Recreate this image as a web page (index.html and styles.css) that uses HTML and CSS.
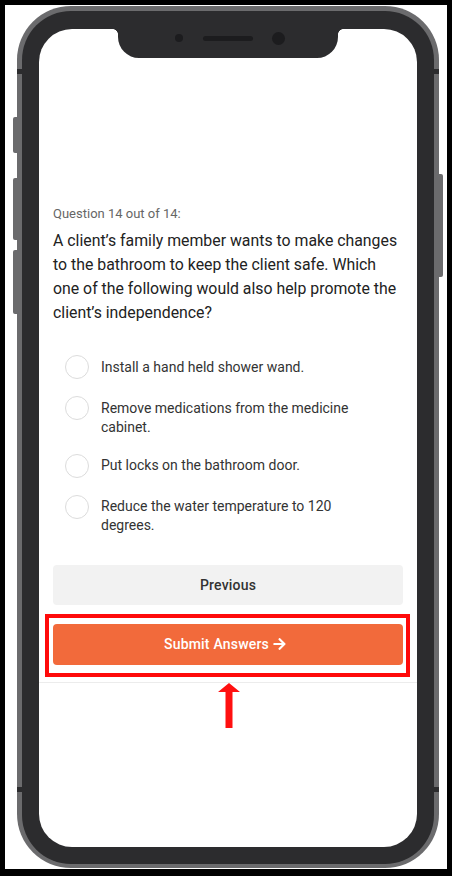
FILE: index.html
```html
<!DOCTYPE html>
<html lang="en">
<head>
<meta charset="utf-8">
<title>Quiz</title>
<link rel="stylesheet" href="styles.css">
</head>
<body>
<div class="frame">
  <div class="phone">
    <span class="side-btn side-l1"></span>
    <span class="side-btn side-l2"></span>
    <span class="side-btn side-l3"></span>
    <span class="side-btn side-r1"></span>
    <span class="band band-tl"></span>
    <span class="band band-tr"></span>
    <span class="band band-bl"></span>
    <span class="band band-br"></span>
    <div class="body">
      <div class="screen">
        <div class="notch">
          <div class="notch-row">
            <span class="sensor"></span>
            <span class="speaker"></span>
            <span class="camera"></span>
          </div>
        </div>
        <div class="content">
          <p class="q-label">Question 14 out of 14:</p>
          <p class="q-text">A client’s family member wants to make changes to the bathroom to keep the client safe. Which one of the following would also help promote the client’s independence?</p>
          <div class="options">
            <div class="option"><span class="radio"></span><span class="opt-text">Install a hand held shower wand.</span></div>
            <div class="option"><span class="radio"></span><span class="opt-text">Remove medications from the medicine cabinet.</span></div>
            <div class="option"><span class="radio"></span><span class="opt-text">Put locks on the bathroom door.</span></div>
            <div class="option"><span class="radio"></span><span class="opt-text">Reduce the water temperature to 120 degrees.</span></div>
          </div>
          <div class="btn btn-prev">Previous</div>
          <div class="highlight">
            <div class="btn btn-submit">Submit Answers
              <svg class="arrow-icon" viewBox="0 0 448 512" aria-hidden="true"><path fill="#fff" d="M190.5 66.9l22.2-22.2c9.4-9.4 24.6-9.4 33.9 0L441 239c9.4 9.4 9.4 24.6 0 33.9L246.6 467.3c-9.4 9.4-24.6 9.4-33.9 0l-22.2-22.2c-9.5-9.5-9.3-25 .4-34.3L311.4 296H24c-13.3 0-24-10.7-24-24v-32c0-13.3 10.7-24 24-24h287.4L190.9 101.2c-9.8-9.3-10-24.8-.4-34.3z"/></svg>
            </div>
          </div>
          <div class="separator"></div>
          <div class="pointer">
            <svg viewBox="0 0 22 46" width="22" height="46" aria-hidden="true"><polygon fill="#ff1010" points="11,0 22,9 14.5,9 14.5,45 7.5,45 7.5,9 0,9"/></svg>
          </div>
        </div>
      </div>
    </div>
  </div>
</div>
</body>
</html>
```

FILE: styles.css
```css
* { box-sizing: border-box; }
html, body { margin: 0; padding: 0; background: #fff; }
body { font-family: Roboto, "Liberation Sans", sans-serif; }

.frame {
  width: 452px;
  height: 876px;
  border: 5px solid #000;
  border-bottom-width: 7px;
  padding: 1px 0 0 12px;
  background: #fff;
}

.phone {
  position: relative;
  width: 422px;
  height: 862px;
  background: #6b6b6d;
  border-radius: 54px;
  padding: 5px 5px 4px 5px;
}

.side-btn {
  position: absolute;
  width: 6px;
  background: #6b6b6d;
  border-radius: 2px;
}
.side-l1 { left: -4px; top: 111px; height: 36px; }
.side-l2 { left: -4px; top: 172px; height: 62px; }
.side-l3 { left: -4px; top: 244px; height: 64px; }
.side-r1 { right: -4px; top: 168px; height: 103px; }

.band {
  position: absolute;
  width: 6px;
  height: 5px;
  background: #2c2c2e;
}
.band-tl { left: 0; top: 63px; }
.band-tr { right: 0; top: 63px; }
.band-bl { left: 0; top: 781px; }
.band-br { right: 0; top: 781px; }

.body {
  height: 100%;
  background: #2c2c2e;
  border-radius: 49px;
  padding: 18px 17px 17px 17px;
}

.screen {
  position: relative;
  height: 100%;
  background: #fff;
  border-radius: 33px;
  overflow: hidden;
}

.notch {
  position: absolute;
  top: 0;
  left: 79px;
  width: 220px;
  height: 29px;
  background: #2c2c2e;
  border-radius: 0 0 21px 21px;
}
.notch::before,
.notch::after {
  content: "";
  position: absolute;
  top: 0;
  width: 5px;
  height: 5px;
}
.notch::before {
  left: -5px;
  background: radial-gradient(circle at 0 100%, transparent 4.5px, #2c2c2e 5px);
}
.notch::after {
  right: -5px;
  background: radial-gradient(circle at 100% 100%, transparent 4.5px, #2c2c2e 5px);
}
.notch-row {
  display: flex;
  align-items: center;
  height: 18px;
  padding-left: 57px;
}
.sensor {
  width: 8px;
  height: 8px;
  border-radius: 50%;
  background: #1c1c1e;
}
.speaker {
  width: 50px;
  height: 5px;
  border-radius: 3px;
  background: #1c1c1e;
  margin-left: 20px;
}
.camera {
  width: 13px;
  height: 13px;
  border-radius: 50%;
  background: #1c1c1e;
  margin-left: 19px;
}

.content {
  padding: 177px 14px 0 14px;
}

.q-label {
  margin: 0 0 7px 0;
  font-size: 13px;
  line-height: 16px;
  color: #666;
}

.q-text {
  margin: 0;
  font-size: 15.85px;
  line-height: 24px;
  color: #222;
}

.options {
  margin-top: 30px;
  display: flex;
  flex-direction: column;
  gap: 17px;
}

.option {
  display: flex;
  align-items: flex-start;
  gap: 12px;
  padding-left: 12px;
  padding-right: 50px;
}

.radio {
  flex: none;
  width: 24px;
  height: 24px;
  border: 1.5px solid #dcdcdc;
  border-radius: 50%;
  background: #fff;
}

.opt-text {
  margin-top: 2.5px;
  font-size: 14px;
  line-height: 19px;
  color: #333;
}

.btn {
  display: flex;
  align-items: center;
  justify-content: center;
  border-radius: 4px;
  font-size: 14px;
  font-weight: 500;
}

.btn-prev {
  margin-top: 29.5px;
  height: 40px;
  background: #f2f2f2;
  color: #333;
  letter-spacing: 0.2px;
}

.highlight {
  margin: 9px -7px 0 -8px;
  border: 4px solid #ff0a0a;
  padding: 6px 3px 8px 4px;
}

.btn-submit {
  height: 41px;
  background: #f26a3b;
  color: #fff;
  gap: 4px;
  letter-spacing: 0.2px;
  padding-right: 6px;
}

.arrow-icon {
  width: 13px;
  height: 14px;
}

.separator {
  margin: 5px -14px 0 -14px;
  height: 1px;
  background: #ececec;
}

.pointer {
  display: flex;
  justify-content: center;
  padding-left: 1px;
}
.pointer svg { display: block; }
```
